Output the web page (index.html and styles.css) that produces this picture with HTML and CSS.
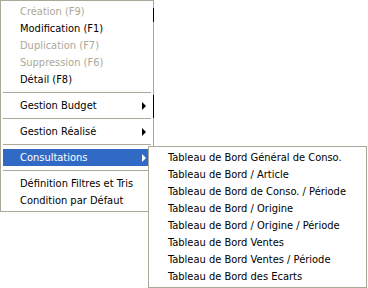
FILE: index.html
```html
<!DOCTYPE html>
<html lang="fr">
<head>
    <meta charset="UTF-8">
    <title>Menu contextuel</title>
    <link rel="stylesheet" href="styles.css">
</head>
<body>
    <ul class="menu menu-main">
        <li class="item disabled">Création (F9)</li>
        <li class="item">Modification (F1)</li>
        <li class="item disabled">Duplication (F7)</li>
        <li class="item disabled">Suppression (F6)</li>
        <li class="item">Détail (F8)</li>
        <li class="sep"></li>
        <li class="item sub">Gestion Budget</li>
        <li class="sep"></li>
        <li class="item sub">Gestion Réalisé</li>
        <li class="sep"></li>
        <li class="item sub active">Consultations</li>
        <li class="sep"></li>
        <li class="item">Définition Filtres et Tris</li>
        <li class="item">Condition par Défaut</li>
    </ul>

    <ul class="menu menu-sub">
        <li class="item">Tableau de Bord Général de Conso.</li>
        <li class="item">Tableau de Bord / Article</li>
        <li class="item">Tableau de Bord de Conso. / Période</li>
        <li class="item">Tableau de Bord / Origine</li>
        <li class="item">Tableau de Bord / Origine / Période</li>
        <li class="item">Tableau de Bord Ventes</li>
        <li class="item">Tableau de Bord Ventes / Période</li>
        <li class="item">Tableau de Bord des Ecarts</li>
    </ul>

    <span class="mark mark-a"></span>
    <span class="mark mark-b"></span>
</body>
</html>
```

FILE: styles.css
```css
body {
    margin: 0;
    width: 368px;
    height: 288px;
    background: #fff;
    font-family: "DejaVu Sans Condensed", "DejaVu Sans", sans-serif;
    font-size: 11px;
    color: #000;
    position: relative;
    overflow: hidden;
}

.menu {
    list-style: none;
    margin: 0;
    padding: 2px;
    background: #fff;
    border: 1px solid #aca899;
    position: absolute;
}

.menu-main {
    left: 0;
    top: 0;
    width: 148px;
}

.menu-sub {
    left: 148px;
    top: 146px;
    width: 213px;
}

.item {
    height: 17px;
    line-height: 17px;
    padding-left: 17px;
    position: relative;
    white-space: nowrap;
}

.disabled {
    color: #aca899;
}

.sub::after {
    content: "";
    position: absolute;
    right: 5px;
    top: 5px;
    border-left: 4px solid #000;
    border-top: 4px solid transparent;
    border-bottom: 4px solid transparent;
}

.active {
    background: #316ac5;
    color: #fff;
}

.active::after {
    border-left-color: #fff;
}

.sep {
    height: 1px;
    margin: 4px 0;
    background: #aca899;
}

/* restes de l'ombre sur le bord droit */
.mark {
    position: absolute;
    left: 153px;
    width: 1px;
    background: #000;
}

.mark-a {
    top: 8px;
    height: 14px;
}

.mark-b {
    top: 95px;
    height: 23px;
}
```
